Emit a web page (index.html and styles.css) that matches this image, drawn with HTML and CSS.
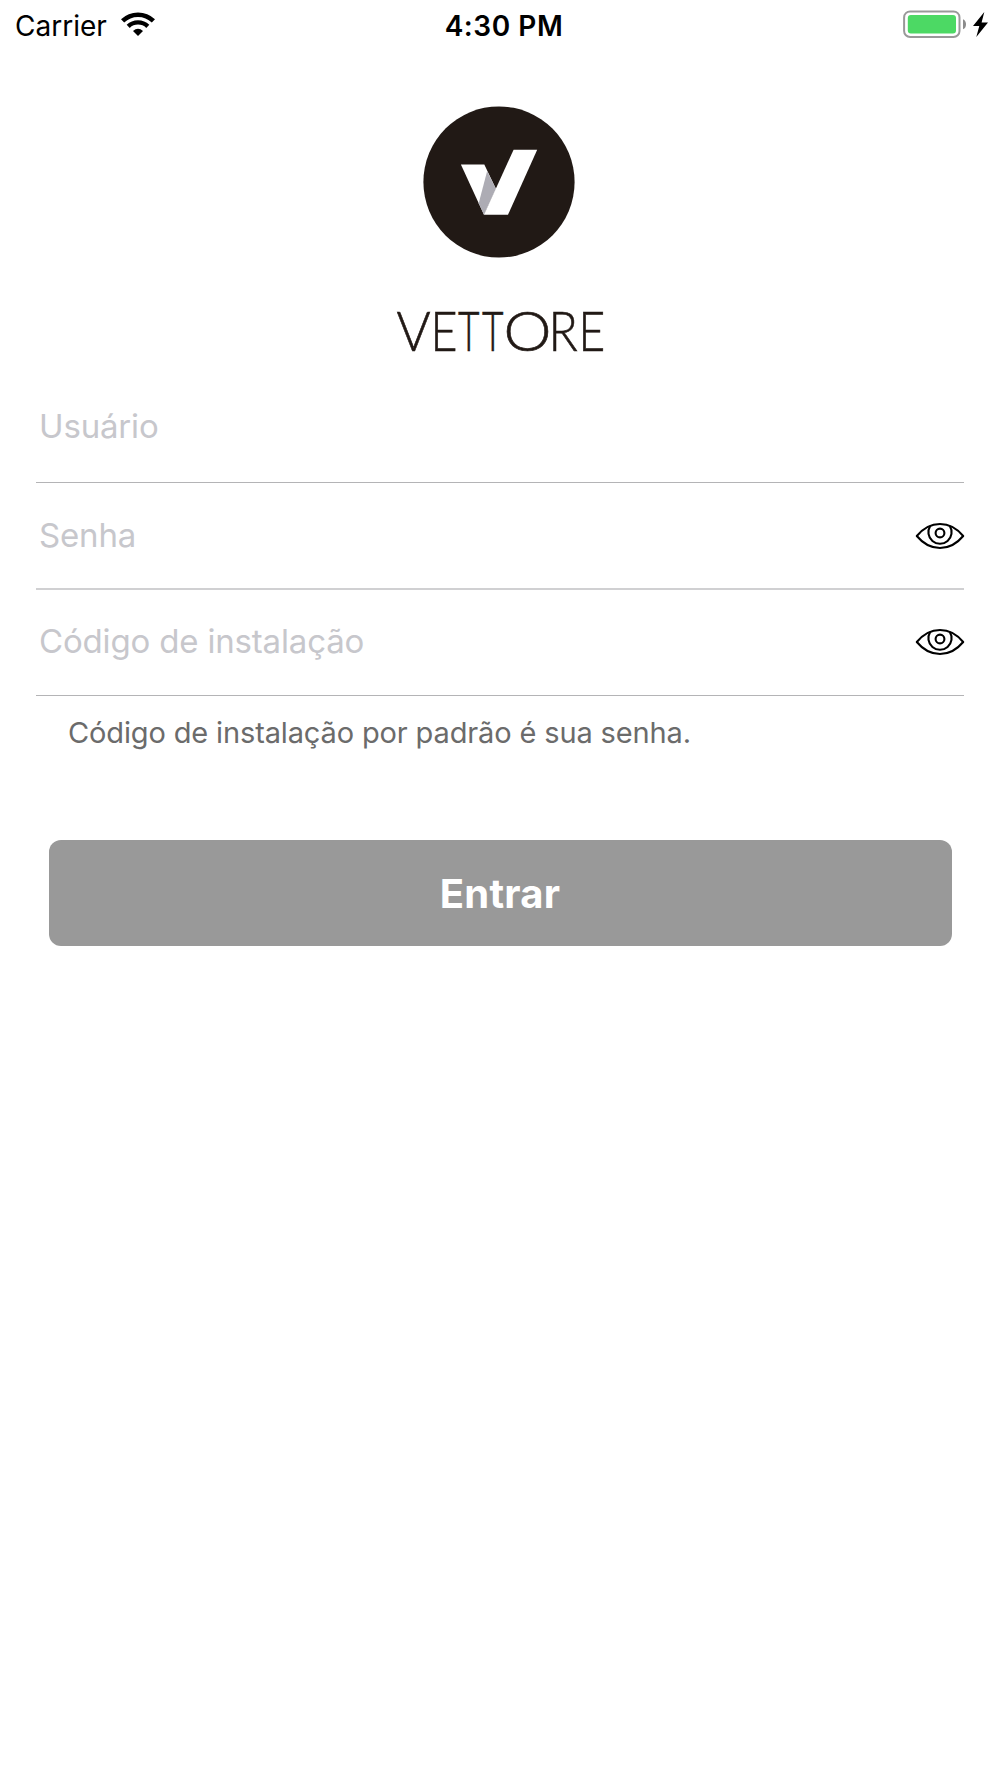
FILE: index.html
```
<!DOCTYPE html>
<html lang="pt-BR">
<head>
<meta charset="utf-8">
<title>Vettore</title>
<link rel="stylesheet" href="styles.css">
</head>
<body>
<header class="status">
  <div class="status-left">
    <span class="carrier">Carrier</span>
    <svg class="wifi" width="34" height="25" viewBox="0 0 34 25" fill="none" stroke="#000">
      <path d="M1.6 8.9A22.2 22.2 0 0 1 32.4 8.9" stroke-width="4.6"/>
      <path d="M7.2 14.3A14.2 14.2 0 0 1 26.8 14.3" stroke-width="4.4"/>
      <path d="M12 18.9Q17 14.7 22 18.9L17 24Z" fill="#000" stroke="none"/>
    </svg>
  </div>
  <span class="time">4:30 PM</span>
  <div class="status-right">
    <svg width="87" height="30" viewBox="901 9 87 30">
      <rect x="904.1" y="11.4" width="55.4" height="25.6" rx="6" fill="none" stroke="#999" stroke-width="2"/>
      <rect x="907.8" y="15" width="48.2" height="18.4" rx="3" fill="#4cd964"/>
      <path d="M963 19.2C967 20.5 967 28 963 29.3Z" fill="#8c8c8c"/>
      <path d="M984.3 12L973 26H979.3L976.3 37L988 22.5H981.6Z" fill="#000"/>
    </svg>
  </div>
</header>

<main class="login">
  <div class="brand">
    <svg class="logo" width="152" height="152" viewBox="422.7 105.8 152 152">
      <circle cx="498.7" cy="181.8" r="75.6" fill="#211915"/>
      <path d="M460.6 164.3H484L495.6 188.5L483.7 214.5Z" fill="#fff"/>
      <path d="M486.8 171L495.7 188.8L483.7 214.5L478.4 203Z" fill="#adacb4"/>
      <path d="M513.3 149.5H536.9L507.7 214.5H483.7Z" fill="#fff"/>
    </svg>
    <svg class="wordmark" width="220" height="76" viewBox="390 292 220 76">
      <text y="351.4"><tspan x="396.6" textLength="34.2" lengthAdjust="spacingAndGlyphs">V</tspan><tspan x="430.6" textLength="27" lengthAdjust="spacingAndGlyphs">E</tspan><tspan x="458" textLength="21.5" lengthAdjust="spacingAndGlyphs">T</tspan><tspan x="482" textLength="21.5" lengthAdjust="spacingAndGlyphs">T</tspan><tspan x="503.6" textLength="48" lengthAdjust="spacingAndGlyphs">O</tspan><tspan x="548.5" textLength="29.2" lengthAdjust="spacingAndGlyphs">R</tspan><tspan x="578.5" textLength="26.7" lengthAdjust="spacingAndGlyphs">E</tspan></text>
    </svg>
  </div>

  <div class="field field-user"><span class="hint">Usuário</span></div>
  <div class="field field-password">
    <span class="hint">Senha</span>
    <svg class="eye" width="50" height="30" viewBox="0 0 50 30">
      <path d="M1.8 15C15-1 35-1 48.2 15C35 31 15 31 1.8 15Z"/>
      <path d="M15.2 5A11.6 11.6 0 1 0 34.8 5"/>
      <circle cx="25" cy="12" r="4.4"/>
    </svg>
  </div>
  <div class="field field-code">
    <span class="hint">Código de instalação</span>
    <svg class="eye" width="50" height="30" viewBox="0 0 50 30">
      <path d="M1.8 15C15-1 35-1 48.2 15C35 31 15 31 1.8 15Z"/>
      <path d="M15.2 5A11.6 11.6 0 1 0 34.8 5"/>
      <circle cx="25" cy="12" r="4.4"/>
    </svg>
  </div>
  <p class="note">Código de instalação por padrão é sua senha.</p>
  <button class="submit" type="button">Entrar</button>
</main>
</body>
</html>
```
FILE: styles.css
```
* { box-sizing: border-box; }

body {
  margin: 0;
  min-height: 1778px;
  background: #fff;
  font-family: Inter, "Liberation Sans", sans-serif;
  color: #000;
}

.status {
  display: grid;
  grid-template-columns: 1fr auto 1fr;
  height: 50px;
  padding: 0 12px 0 15px;
  font-size: 28px;
  line-height: 52px;
}

.status-left { display: flex; gap: 14px; }
.wifi { margin-top: 12px; }
.time { padding-left: 5px; font-weight: 600; letter-spacing: 0.55px; }
.status-right { display: flex; justify-content: flex-end; padding-top: 9px; }

.login { padding: 0 36px; }

.brand {
  display: flex;
  flex-direction: column;
  align-items: center;
  gap: 34px;
  height: 319px;
  padding-top: 56px;
}

.brand svg { flex: none; }
.logo { margin-right: 3px; }

.wordmark text {
  font-family: Lato, sans-serif;
  font-size: 54.5px;
  font-weight: 300;
  fill: #211915;
  stroke: #211915;
  stroke-width: 0.6px;
}

.field {
  display: flex;
  justify-content: space-between;
  border-bottom: 1px solid #b4b4b6;
  padding-left: 3px;
  font-size: 33px;
  line-height: 40px;
  color: #c7c7cc;
}

.field-user { height: 114px; padding-top: 37px; }
.field-password { height: 107px; padding-top: 32px; border-bottom: 2px solid #d0d0d2; }
.field-code { height: 106px; padding-top: 31px; }
.hint { letter-spacing: -0.17px; }

.eye {
  flex: none;
  margin: 6px -1px 0 0;
  fill: none;
  stroke: #000;
  stroke-width: 2.1;
  stroke-linejoin: round;
}

.note {
  margin: 17px 0 0 32px;
  font-size: 29px;
  line-height: 40px;
  letter-spacing: -0.14px;
  color: #6b6b6b;
}

.submit {
  display: block;
  width: 903px;
  height: 106px;
  margin: 87px auto 0;
  padding: 1px 0 0;
  border: 0;
  border-radius: 12px;
  background: #999;
  color: #fff;
  font: 700 40px/1 Inter, "Liberation Sans", sans-serif;
  letter-spacing: 0.2px;
}
```
